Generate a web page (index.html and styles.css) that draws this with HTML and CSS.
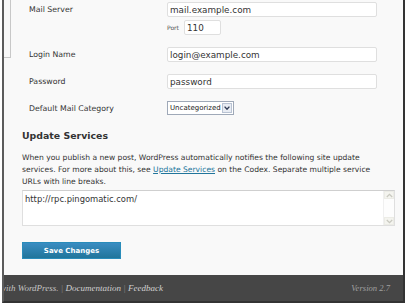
FILE: index.html
```html
<!DOCTYPE html>
<html lang="en">
<head>
    <meta charset="UTF-8">
    <title>Writing Settings</title>
    <link rel="stylesheet" href="styles.css">
</head>
<body>
    <div class="frame">
        <div class="wrap">
            <div class="menu-edge"></div>

            <!-- Post via e-mail -->
            <div class="form-table">
                <label class="row-label" for="mailserver">Mail Server</label>
                <div class="field">
                    <input type="text" id="mailserver" class="text wide" value="mail.example.com">
                    <div class="port-line">
                        <label class="port-label" for="port">Port</label>
                        <input type="text" id="port" class="text port" value="110">
                    </div>
                </div>

                <label class="row-label" for="login">Login Name</label>
                <div class="field">
                    <input type="text" id="login" class="text wide" value="login@example.com">
                </div>

                <label class="row-label" for="pass">Password</label>
                <div class="field">
                    <input type="text" id="pass" class="text wide" value="password">
                </div>

                <label class="row-label">Default Mail Category</label>
                <div class="field">
                    <div class="select">
                        <span class="select-value">Uncategorized</span>
                        <span class="select-btn">
                            <svg width="6" height="4" viewBox="0 0 6 4"><path d="M0.6 0.6 L3 3.2 L5.4 0.6" fill="none" stroke="#2f3b55" stroke-width="1.4"/></svg>
                        </span>
                    </div>
                </div>
            </div>

            <!-- Update Services -->
            <h3 class="section-title">Update Services</h3>
            <p class="section-desc">When you publish a new post, WordPress automatically notifies the following site update services. For more about this, see <a href="#">Update Services</a> on the Codex. Separate multiple service URLs with line breaks.</p>

            <div class="textbox">
                <textarea class="ping-sites">http://rpc.pingomatic.com/</textarea>
                <div class="scrollbar">
                    <span class="arrow">
                        <svg width="7" height="5" viewBox="0 0 7 5"><path d="M0.8 4 L3.5 1.3 L6.2 4" fill="none" stroke="#c9c9c0" stroke-width="1.3"/></svg>
                    </span>
                    <span class="arrow">
                        <svg width="7" height="5" viewBox="0 0 7 5"><path d="M0.8 1 L3.5 3.7 L6.2 1" fill="none" stroke="#c9c9c0" stroke-width="1.3"/></svg>
                    </span>
                </div>
            </div>

            <button type="submit" class="button-primary">Save Changes</button>
        </div>

        <div class="footer">
            <p class="footer-left">with WordPress. <span class="sep">|</span> <a href="#">Documentation</a> <span class="sep">|</span> <a href="#">Feedback</a></p>
            <p class="footer-right">Version 2.7</p>
        </div>
    </div>
</body>
</html>
```

FILE: styles.css
```css
* {
    box-sizing: border-box;
}

body {
    margin: 0;
    background-color: #fff;
    font-family: "DejaVu Sans", Verdana, sans-serif;
    color: #333;
}

.frame {
    margin-left: 2px;
    width: 403px;
    border-left: 2px solid #5c5c5c;
    border-right: 2px solid #333;
    border-bottom: 2px solid #333;
}

.wrap {
    position: relative;
    height: 275px;
    padding: 2px 0 0 18px;
    background-color: #f9f9f9;
    overflow: hidden;
}

.menu-edge {
    position: absolute;
    left: 0;
    top: 0;
    width: 7px;
    height: 58px;
    border-right: 1px solid #c8c8c8;
    border-bottom: 1px solid #c8c8c8;
}

.form-table {
    display: grid;
    grid-template-columns: 138px 1fr;
    row-gap: 12px;
    padding-left: 7px;
}

.row-label {
    font-size: 7.8px;
    line-height: 15px;
    color: #333;
}

.text {
    display: block;
    height: 15px;
    padding: 0 2px;
    border: 1px solid #dfdfdf;
    border-radius: 2px;
    background-color: #fff;
    font-family: "DejaVu Sans", Verdana, sans-serif;
    font-size: 8.8px;
    color: #333;
}

.wide {
    width: 210px;
}

.port-line {
    display: flex;
    align-items: center;
    margin-top: 3px;
}

.port-label {
    width: 17px;
    font-size: 6px;
    color: #555;
}

.port {
    width: 37px;
}

.select {
    display: flex;
    align-items: center;
    width: 67px;
    height: 14px;
    border: 1px solid #9fa9b8;
    background-color: #fff;
}

.select-value {
    flex: 1;
    padding-left: 2px;
    font-size: 7px;
    color: #222;
}

.select-btn {
    display: flex;
    align-items: center;
    justify-content: center;
    width: 10px;
    height: 10px;
    margin-right: 1px;
    border: 1px solid #b9c3d3;
    background-color: #e8ecf3;
}

.section-title {
    margin: 14px 0 0;
    font-size: 9.4px;
    line-height: 12px;
    color: #333;
}

.section-desc {
    width: 364px;
    margin: 10px 0 0;
    font-size: 7.6px;
    line-height: 12px;
    color: #333;
}

.section-desc a {
    color: #21759b;
}

.textbox {
    display: flex;
    width: 373px;
    height: 36px;
    margin-top: 2px;
    border: 1px solid #dfdfdf;
    border-top-color: #cfcfcf;
    background-color: #fff;
}

.ping-sites {
    flex: 1;
    padding: 3px 2px;
    border: none;
    resize: none;
    outline: none;
    overflow: hidden;
    font-family: "DejaVu Sans", Verdana, sans-serif;
    font-size: 8.4px;
    color: #333;
}

.scrollbar {
    display: flex;
    flex-direction: column;
    justify-content: space-between;
    width: 11px;
    border-left: 1px solid #f0f0f0;
    background-color: #fdfdfd;
}

.arrow {
    display: flex;
    align-items: center;
    justify-content: center;
    height: 8px;
    border: 1px solid #ecece6;
    background-color: #f4f4ef;
}

.button-primary {
    display: block;
    width: 99px;
    height: 17px;
    margin-top: 16px;
    padding: 0;
    border: 1px solid #298cba;
    background: linear-gradient(#3a8dc2, #21759b);
    font-family: "DejaVu Sans", Verdana, sans-serif;
    font-size: 7px;
    font-weight: bold;
    color: #fff;
    cursor: pointer;
}

.footer {
    display: flex;
    justify-content: space-between;
    align-items: center;
    height: 26px;
    padding-right: 13px;
    background-color: #464646;
    overflow: hidden;
    font-family: "Liberation Serif", Georgia, serif;
    font-style: italic;
}

.footer p {
    margin: 0;
}

.footer-left {
    margin-left: -4px !important;
    font-size: 9px;
    color: #c4c4c4;
    white-space: nowrap;
}

.footer-left a {
    color: #d0d0d0;
    text-decoration: none;
}

.sep {
    color: #888;
}

.footer-right {
    font-size: 8.6px;
    color: #a0a0a0;
}
```
